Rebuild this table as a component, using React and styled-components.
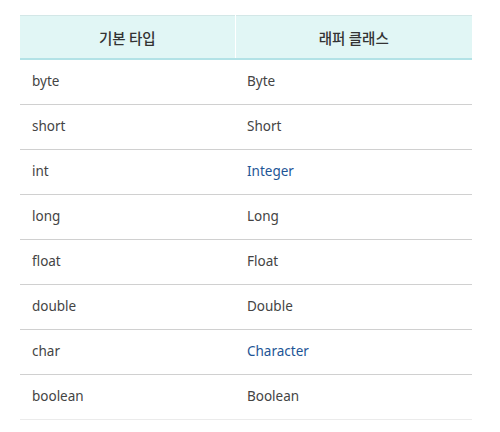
import React from "react";
import styled, { createGlobalStyle } from "styled-components";

const Global = createGlobalStyle`
  html, body { margin: 0; padding: 0; background: #fff; }
  body { font-family: "Noto Sans", "Noto Sans CJK KR", sans-serif; }
`;

const Page = styled.div`
  padding: 15px 28px 0 20px;
`;

const Table = styled.table`
  width: 452px;
  border-collapse: collapse;
  table-layout: fixed;
`;

const HeadCell = styled.th`
  height: 42px;
  padding: 0 12px;
  background: #e1f6f5;
  border-top: 1px solid #d3e7e7;
  border-bottom: 2px solid #b2e2e6;
  border-right: ${(p) => (p.$divider ? "1px solid #ffffff" : "none")};
  font-family: "Noto Sans CJK KR", "Noto Sans", sans-serif;
  font-size: 14.5px;
  font-weight: 500;
  color: #333;
  text-align: center;
  vertical-align: middle;
`;

const Row = styled.tr`
  border-bottom: 1px solid ${(p) => (p.$last ? "#ebebeb" : "#d0d0d0")};
`;

const Cell = styled.td`
  box-sizing: border-box;
  height: 45px;
  padding: 0 12px 1px;
  font-size: 13.5px;
  line-height: 18px;
  color: ${(p) => (p.$link ? "#1e5596" : "#444")};
  vertical-align: middle;
`;

const rows = [
  ["byte", "Byte"],
  ["short", "Short"],
  ["int", "Integer", true],
  ["long", "Long"],
  ["float", "Float"],
  ["double", "Double"],
  ["char", "Character", true],
  ["boolean", "Boolean"],
];

export default function App() {
  return (
    <>
      <Global />
      <Page>
        <Table>
          <colgroup>
            <col style={{ width: 215 }} />
            <col style={{ width: 237 }} />
          </colgroup>
          <thead>
            <tr>
              <HeadCell $divider>기본 타입</HeadCell>
              <HeadCell>래퍼 클래스</HeadCell>
            </tr>
          </thead>
          <tbody>
            {rows.map(([a, b, link], i) => (
              <Row key={a} $last={i === rows.length - 1}>
                <Cell>{a}</Cell>
                <Cell $link={link}>{b}</Cell>
              </Row>
            ))}
          </tbody>
        </Table>
      </Page>
    </>
  );
}
